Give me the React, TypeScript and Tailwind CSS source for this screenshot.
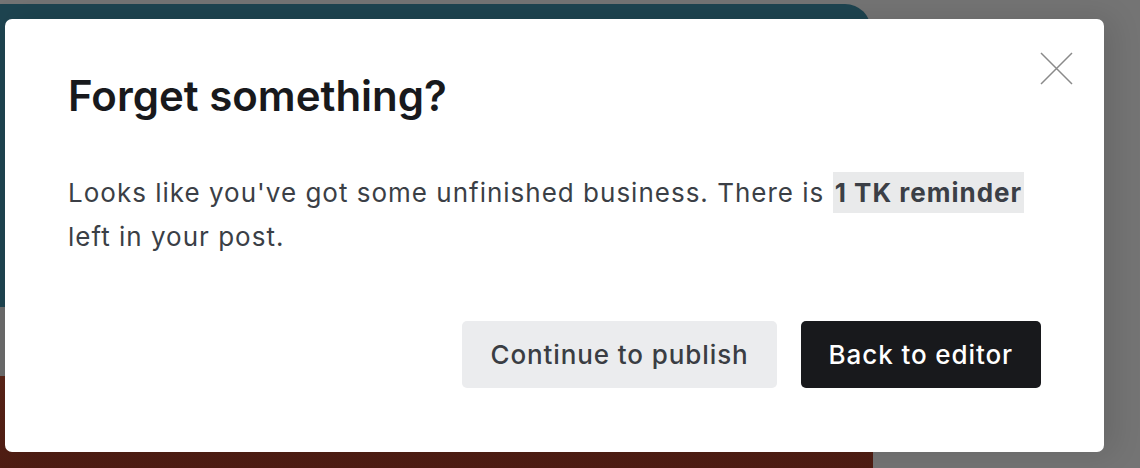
/** Page behind the dialog, already dimmed by the overlay. */
function DimmedPage() {
  return (
    <div className="flex h-full flex-col">
      <div className="h-[4px]" />
      <div className="h-[303px] w-[871px] rounded-tr-[26px] bg-[#1e4450]" />
      <div className="h-[69px] w-[873px] bg-[#6b6b6b]" />
      <div className="w-[873px] flex-1 bg-gradient-to-b from-[#5a2418] to-[#4e1d13]" />
    </div>
  );
}

function ReminderDialog() {
  return (
    <div className="relative flex h-[433px] w-[1099px] flex-col rounded-[7px] bg-white px-[63px] pt-[52px] pb-[64px] shadow-[8px_0_30px_rgba(0,0,0,0.12)]">
      <button className="absolute right-[31px] top-[33px]" aria-label="Close">
        <svg width="33" height="33" viewBox="0 0 33 33" fill="none" stroke="#8a8a8a" strokeWidth="1.5">
          <path d="M1 1 32 32M32 1 1 32" />
        </svg>
      </button>
      <h2 className="text-[42px] font-semibold leading-[50px] text-[#18191c]">
        Forget something?
      </h2>
      <p className="mt-[50px] text-[26px] leading-[44px] tracking-[1px] text-[#3b3f46]">
        Looks like you've got some unfinished business. There is{" "}
        <span className="bg-[#e9eaeb] px-[2px] py-[5px] font-bold">1 TK reminder</span>
        <br />
        left in your post.
      </p>
      <div className="mt-auto flex justify-end gap-[24px]">
        <button className="h-[67px] rounded-[5px] bg-[#ebecee] px-[28px] text-[26px] font-medium tracking-[0.9px] text-[#3a3d43]">
          Continue to publish
        </button>
        <button className="h-[67px] rounded-[5px] bg-[#18191c] px-[28px] text-[26px] font-medium tracking-[0.9px] text-white">
          Back to editor
        </button>
      </div>
    </div>
  );
}

export default function App() {
  return (
    <div className="relative h-[468px] w-full overflow-hidden bg-[#747474] font-['Inter',sans-serif]">
      <DimmedPage />
      <div className="absolute inset-0 pl-[5px] pt-[19px]">
        <ReminderDialog />
      </div>
    </div>
  );
}
